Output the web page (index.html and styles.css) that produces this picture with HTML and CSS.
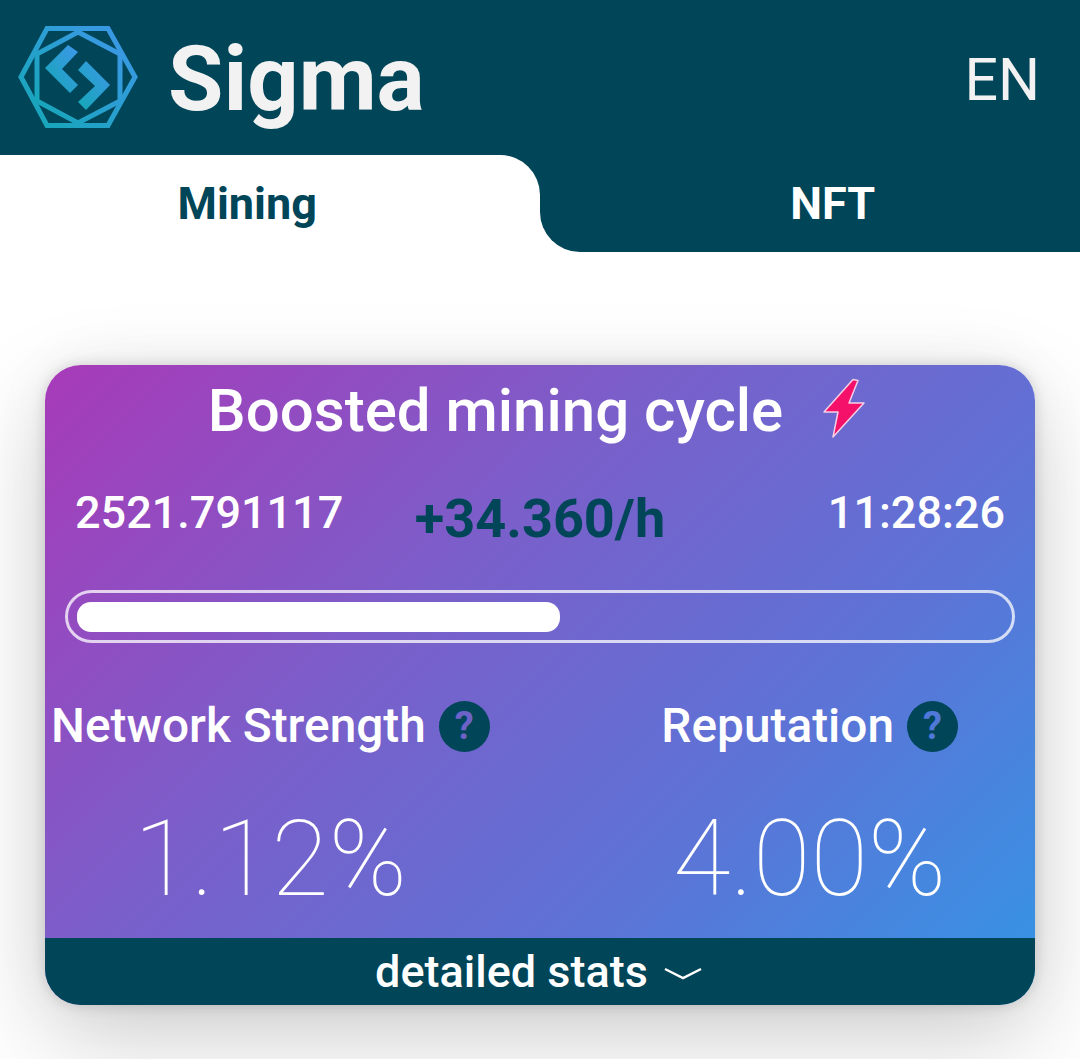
FILE: index.html
```html
<!DOCTYPE html>
<html lang="en">
<head>
  <meta charset="UTF-8">
  <meta name="viewport" content="width=device-width, initial-scale=1.0">
  <title>Sigma</title>
  <link rel="stylesheet" href="styles.css">
</head>
<body>
  <header class="topbar">
    <div class="brand">
      <svg class="logo" viewBox="0 0 150 150" aria-hidden="true">
        <defs>
          <linearGradient id="logoGrad" x1="1" y1="0" x2="0" y2="1">
            <stop offset="0" stop-color="#3e97ea"/>
            <stop offset="1" stop-color="#14a7b5"/>
          </linearGradient>
        </defs>
        <g fill="none" stroke="url(#logoGrad)" stroke-width="5">
          <polygon points="47,25.5 108,25.5 135,74 108,122.5 47,122.5 21,74"/>
          <polygon points="78,29 120,51 120,98 78,120 37,98 37,51"/>
        </g>
        <g fill="url(#logoGrad)">
          <polygon points="68,42 45,65 70,90 78,82 62,66 78,49"/>
          <polygon points="86,58 110,82 86,107 78,99 95,83 78,67"/>
        </g>
      </svg>
      <span class="brand-name">Sigma</span>
    </div>
    <span class="lang">EN</span>
  </header>

  <nav class="tabs">
    <div class="tab tab-active">Mining</div>
    <div class="tab tab-other">NFT</div>
  </nav>

  <main class="card">
    <div class="card-body">
      <div class="cycle-title">
        <span>Boosted mining cycle</span>
        <svg class="bolt" viewBox="0 0 44 64" aria-hidden="true">
          <polygon points="32,1.5 37,2.5 28,25 43,25 12,59 17,34 3,34" fill="#f5106a" stroke="#f6cfe6" stroke-width="1.5" stroke-linejoin="round"/>
        </svg>
      </div>

      <div class="numbers">
        <span class="balance">2521.791117</span>
        <span class="rate">+34.360/h</span>
        <span class="timer">11:28:26</span>
      </div>

      <div class="progress">
        <div class="progress-fill" style="width: 52.2%"></div>
      </div>

      <div class="metrics">
        <div class="metric">
          <div class="metric-label">Network Strength <span class="help help-left">?</span></div>
          <div class="metric-value">1.12%</div>
        </div>
        <div class="metric">
          <div class="metric-label">Reputation <span class="help help-right">?</span></div>
          <div class="metric-value">4.00%</div>
        </div>
      </div>
    </div>

    <div class="card-footer">
      <span>detailed stats</span>
      <svg class="chevron" viewBox="0 0 38 14" aria-hidden="true">
        <polyline points="1,2 19,11 37,2" fill="none" stroke="#ffffff" stroke-width="2.5"/>
      </svg>
    </div>
  </main>
</body>
</html>
```

FILE: styles.css
```css
body {
  font-family: Roboto, Arial, sans-serif;
  margin: 0;
  min-height: 100vh;
  background: #ffffff;
}

.topbar {
  display: flex;
  justify-content: space-between;
  align-items: center;
  height: 155px;
  padding: 0 40px 0 0;
  box-sizing: border-box;
  background: #004558;
}

.brand {
  display: flex;
  align-items: center;
}

.logo {
  width: 150px;
  height: 150px;
  margin-right: 18px;
}

.brand-name {
  font-size: 90px;
  font-weight: 700;
  color: #f2f2f2;
  padding-top: 3px;
}

.lang {
  font-size: 59px;
  color: #f2f2f2;
  padding-top: 4px;
}

.tabs {
  display: flex;
  height: 97px;
  background: linear-gradient(#004558 50%, #ffffff 50%);
}

.tab {
  flex: 1;
  display: flex;
  justify-content: center;
  align-items: center;
  font-size: 45px;
  font-weight: 700;
}

.tab-active {
  background: #ffffff;
  color: #004558;
  border-top-right-radius: 40px;
  padding-right: 45px;
}

.tab-other {
  background: #004558;
  color: #ffffff;
  border-bottom-left-radius: 40px;
  padding-left: 46px;
}

.card {
  width: 990px;
  height: 640px;
  margin: 113px 0 0 45px;
  display: flex;
  flex-direction: column;
  border-radius: 36px;
  overflow: hidden;
  background: linear-gradient(135deg, #a83ab8 0%, #7a5fca 38%, #5d73d6 68%, #3396e6 100%);
  box-shadow: 0 0 14px rgba(0, 0, 0, 0.15), 0 0 60px rgba(0, 0, 0, 0.05), 0 36px 100px rgba(0, 0, 0, 0.18);
}

.card-body {
  flex: 1;
  color: #ffffff;
}

.cycle-title {
  display: flex;
  justify-content: center;
  align-items: center;
  gap: 38px;
  height: 90px;
  padding-right: 7px;
  font-size: 60px;
  font-weight: 500;
}

.bolt {
  width: 44px;
  height: 64px;
}

.numbers {
  display: grid;
  grid-template-columns: 1fr auto 1fr;
  align-items: center;
  height: 110px;
  padding: 0 30px;
  font-size: 45px;
  font-weight: 500;
}

.balance,
.timer {
  padding-top: 5px;
}

.rate {
  font-size: 54px;
  font-weight: 700;
  color: #004558;
  padding-top: 16px;
}

.timer {
  justify-self: end;
}

.progress {
  height: 53px;
  box-sizing: border-box;
  margin: 25px 20px 0;
  border: 3px solid rgba(255, 255, 255, 0.75);
  border-radius: 27px;
  padding: 9px;
}

.progress-fill {
  height: 30px;
  border-radius: 14px;
  background: #ffffff;
}

.metrics {
  display: flex;
  justify-content: space-between;
  margin-top: 57px;
  padding: 0 77px 0 6px;
}

.metric {
  display: flex;
  flex-direction: column;
  align-items: center;
}

.metric-label {
  display: flex;
  align-items: center;
  gap: 13px;
  font-size: 47.8px;
  font-weight: 500;
  height: 52px;
}

.help {
  width: 51px;
  height: 51px;
  border-radius: 50%;
  background: #004558;
  display: flex;
  justify-content: center;
  align-items: center;
  font-size: 38px;
  font-weight: 700;
}

.help-left {
  color: #6c62c8;
}

.help-right {
  color: #5078d8;
}

.metric-value {
  margin-top: 53px;
  font-size: 105px;
  font-weight: 100;
  line-height: 110px;
}

.card-footer {
  display: flex;
  justify-content: center;
  align-items: center;
  gap: 16px;
  height: 67px;
  padding-right: 3px;
  background: #004558;
  color: #ffffff;
  font-size: 45px;
  font-weight: 500;
}

.chevron {
  width: 38px;
  height: 14px;
  margin-top: 4px;
}
```
